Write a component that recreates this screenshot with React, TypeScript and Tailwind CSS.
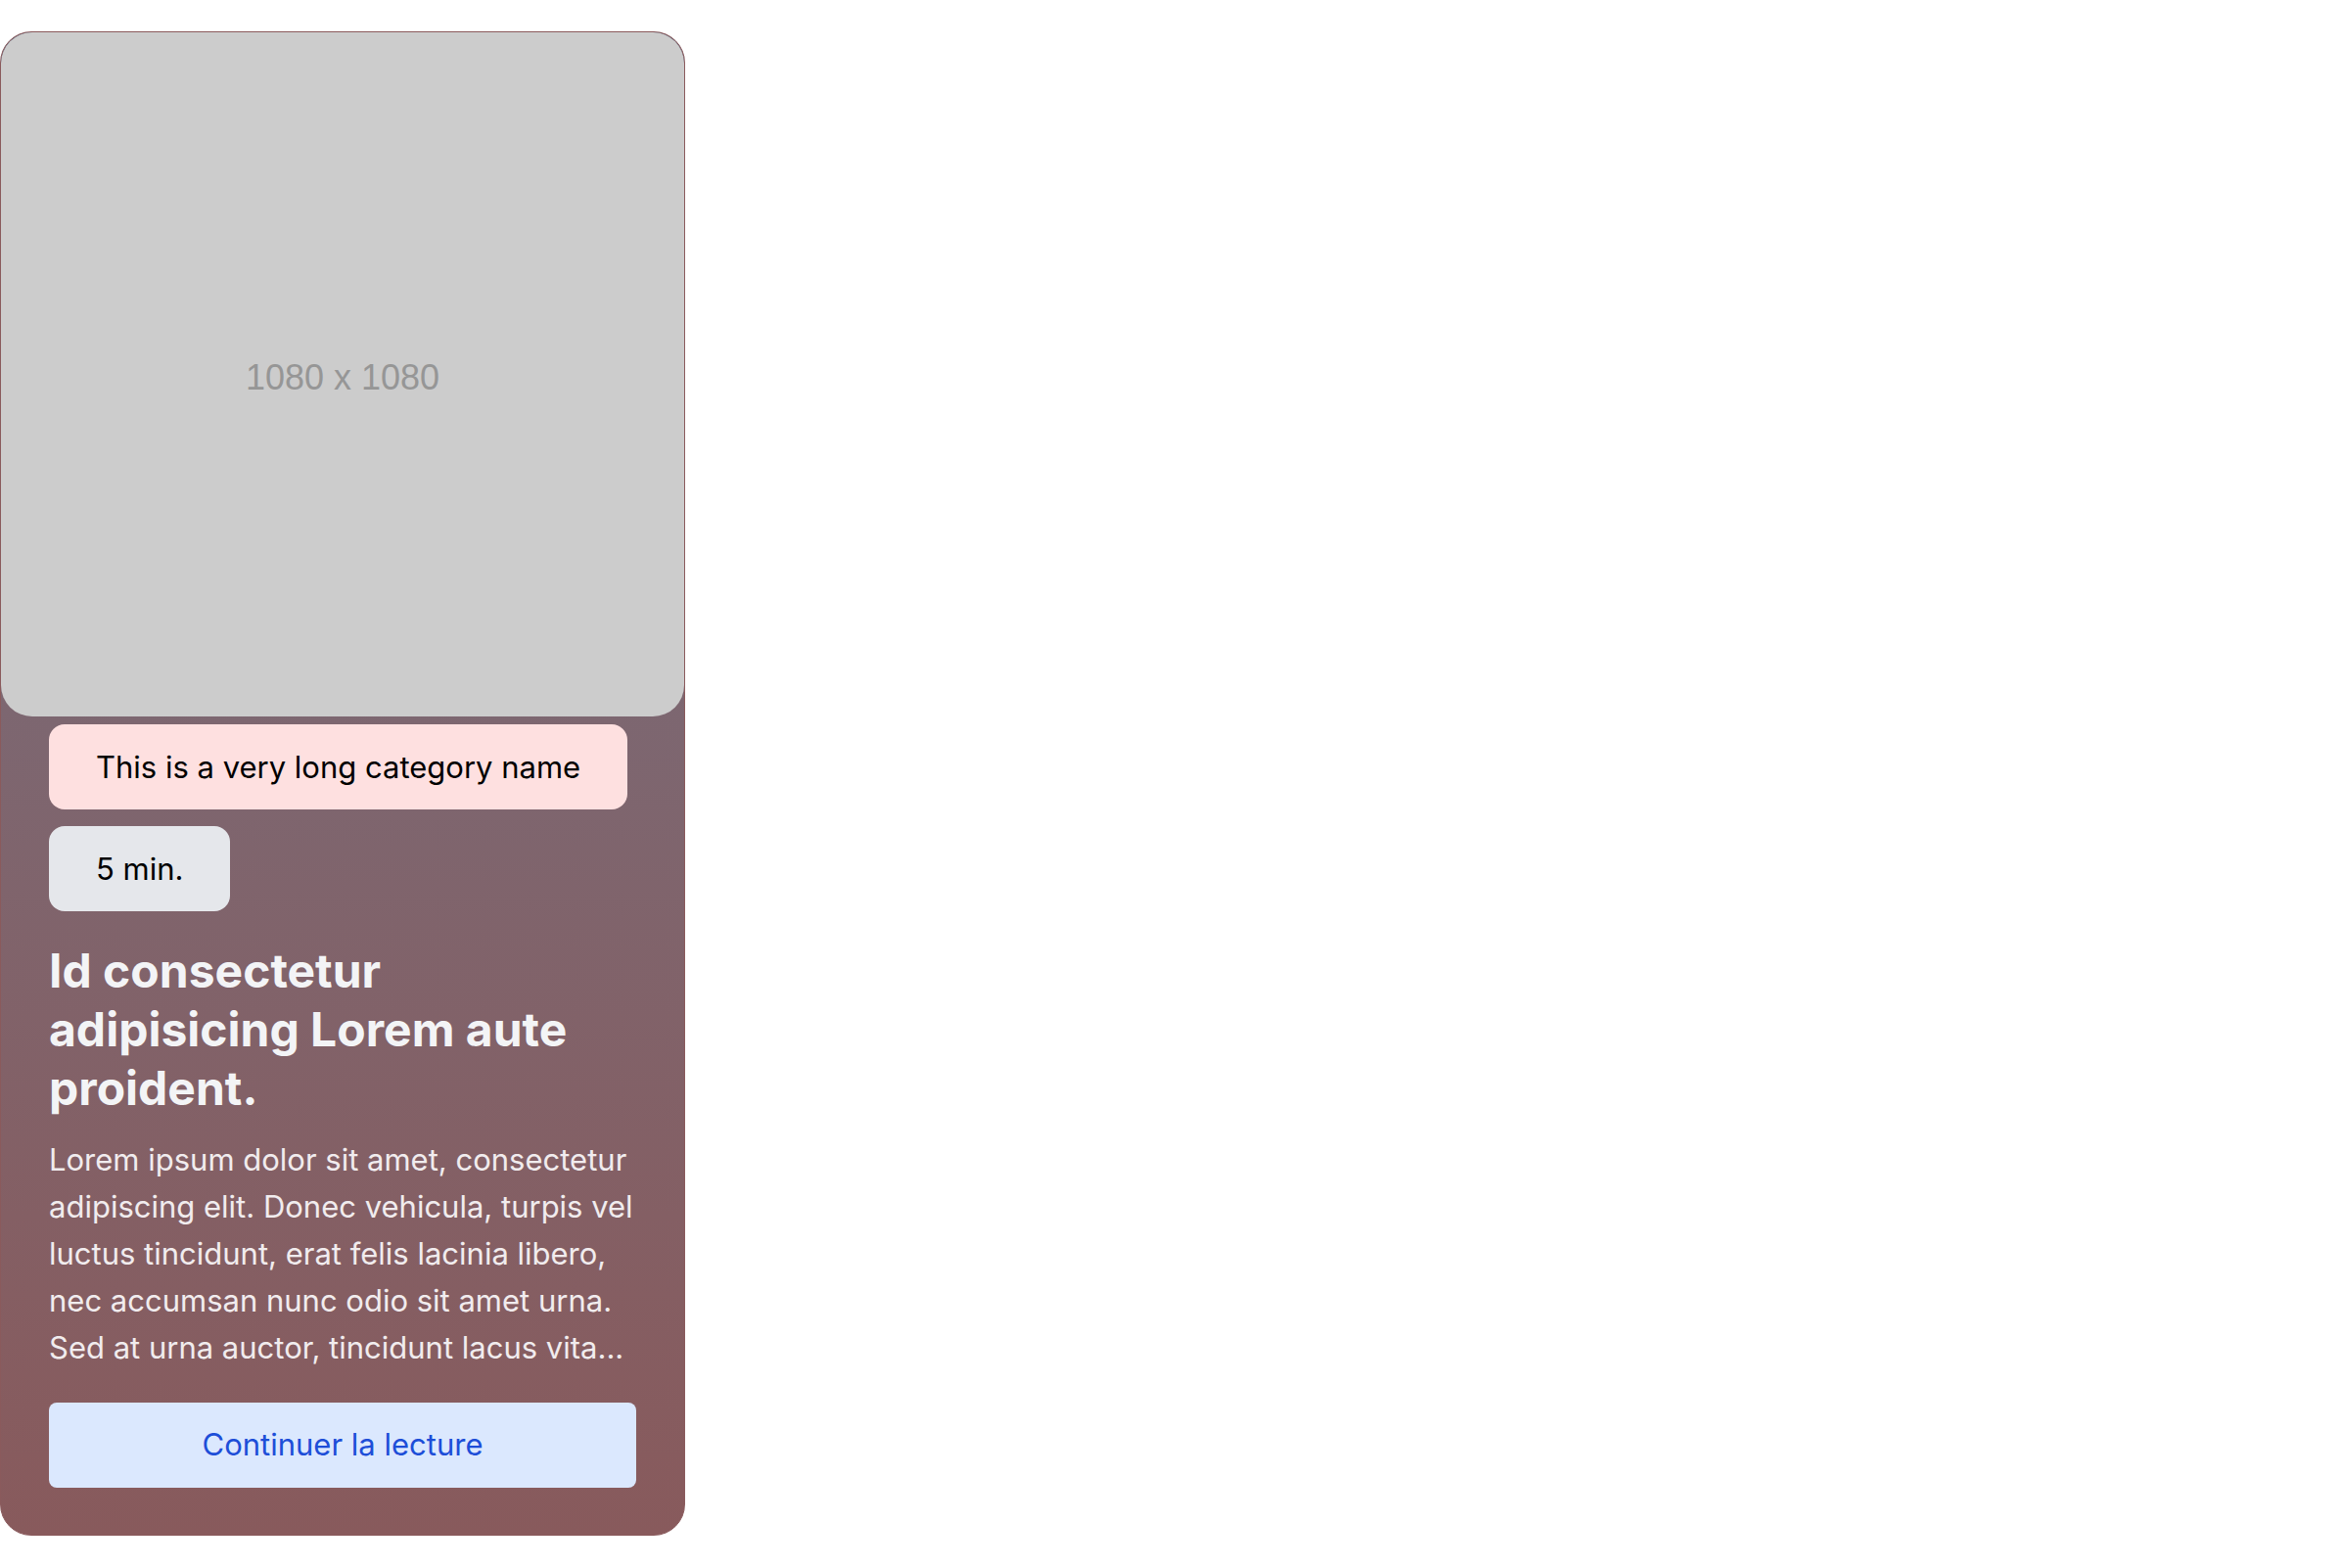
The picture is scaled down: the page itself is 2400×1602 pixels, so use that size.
import * as React from 'react';

type ArticleCardProps = {
  category: string;
  readingTime: string;
  title: string;
  excerpt: string;
  cta: string;
};

const ArticleCard: React.FC<ArticleCardProps> = ({ category, readingTime, title, excerpt, cta }) => {
  return (
    <div className="flex w-[700px] flex-col overflow-hidden rounded-[32px] border border-[#8a5a5c] bg-gradient-to-b from-[#727081] to-[#885a5c] pb-[48px]">
      {/* Placeholder image */}
      <div className="flex h-[699px] w-full items-center justify-center rounded-[32px] bg-[#cccccc] pt-[6px]">
        <span className="font-['Liberation_Sans',Arial,sans-serif] text-[36px] text-[#969696]">1080 x 1080</span>
      </div>

      <div className="flex flex-col px-[49px] pt-[8px]">
        <span className="w-fit rounded-[16px] bg-[#fee0e0] px-[48px] py-[20px] text-[31px] leading-[47px] text-black">
          {category}
        </span>
        <span className="mt-[17px] w-fit rounded-[16px] bg-[#e5e7eb] px-[48px] py-[20px] text-[31px] leading-[47px] text-black">
          {readingTime}
        </span>

        <h2 className="mt-[31px] text-[48px] font-bold leading-[60px] text-[#f3f4f6]">{title}</h2>
        <p className="mt-[19px] text-[31px] leading-[48px] text-[#f1ecee]">{excerpt}</p>

        <button
          className="mt-[32px] h-[87px] w-full rounded-[8px] bg-[#dbe8fe] text-[31px] text-[#1d4ed8]"
          type="button"
        >
          {cta}
        </button>
      </div>
    </div>
  );
};

export default function App() {
  return (
    <div className="min-h-screen bg-white pt-[32px] font-['Inter',sans-serif]">
      <ArticleCard
        category="This is a very long category name"
        readingTime="5 min."
        title="Id consectetur adipisicing Lorem aute proident."
        excerpt="Lorem ipsum dolor sit amet, consectetur adipiscing elit. Donec vehicula, turpis vel luctus tincidunt, erat felis lacinia libero, nec accumsan nunc odio sit amet urna. Sed at urna auctor, tincidunt lacus vita..."
        cta="Continuer la lecture"
      />
    </div>
  );
}
